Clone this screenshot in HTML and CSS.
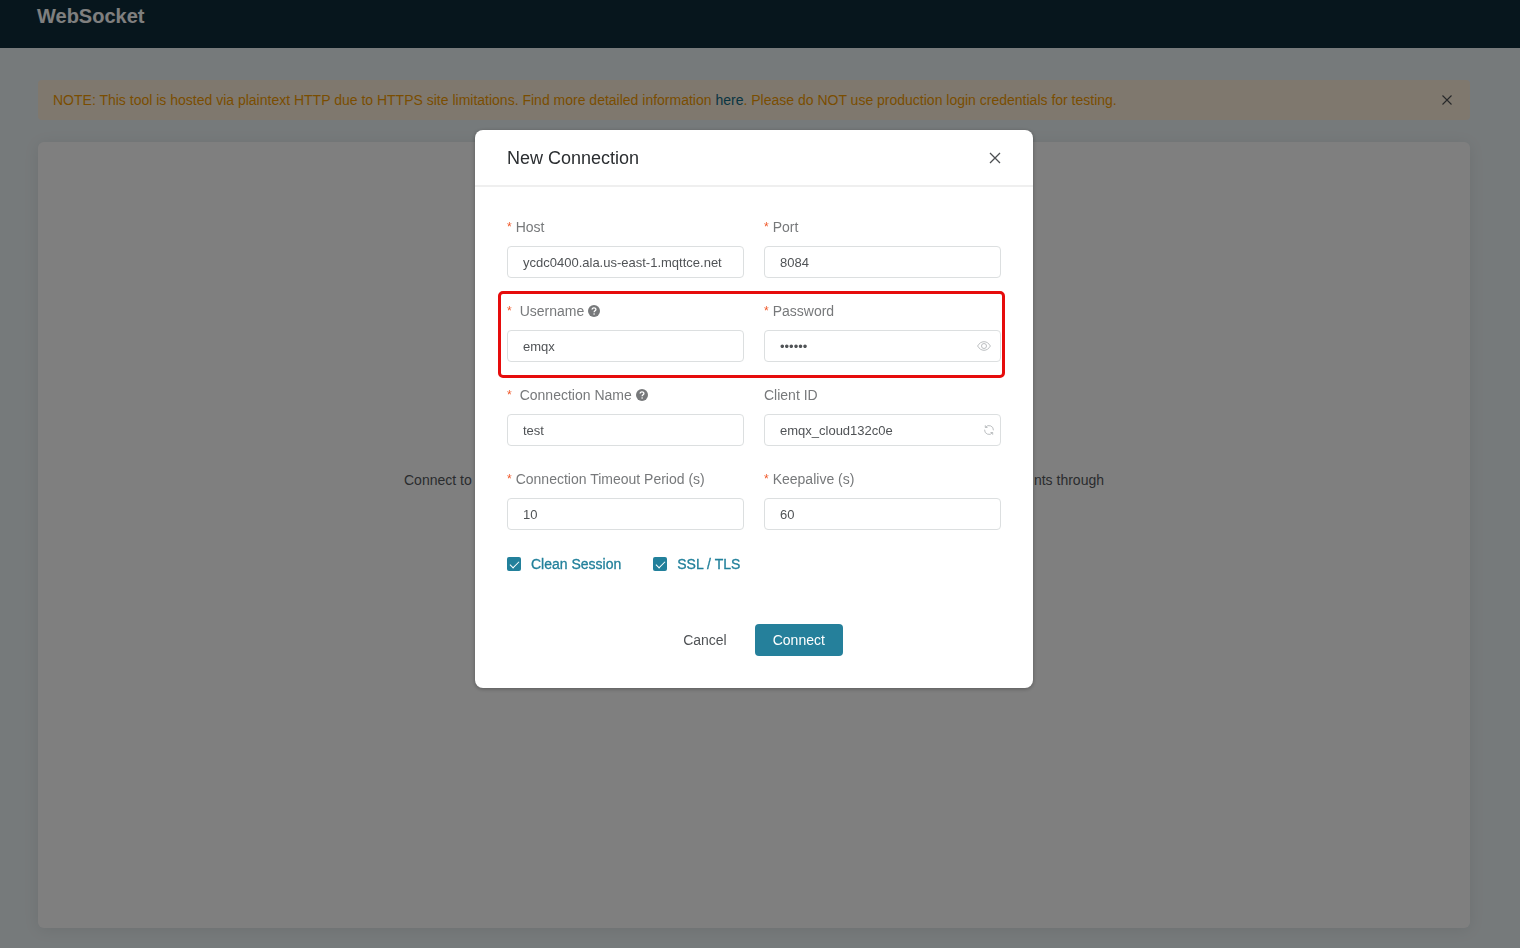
FILE: index.html
```html
<!DOCTYPE html>
<html lang="en">
<head>
<meta charset="utf-8">
<title>WebSocket</title>
<link rel="stylesheet" href="styles.css">
</head>
<body>
<header class="topbar"><h1 class="topbar-title">WebSocket</h1></header>
<main class="content">
  <div class="notice">
    <p class="notice-text">NOTE: This tool is hosted via plaintext HTTP due to HTTPS site limitations. Find more detailed information <a class="notice-link" href="#">here</a>. Please do NOT use production login credentials for testing.</p>
    <button class="icon-button" type="button" aria-label="Dismiss">
      <svg width="10" height="10" viewBox="0 0 10 10" fill="none" stroke="currentColor" stroke-width="1.1"><path d="M.5.5l9 9M9.500.5l-9 9"/></svg>
    </button>
  </div>
  <section class="panel">
    <p class="panel-hint"><span>Connect to</span><span>nts through</span></p>
  </section>
</main>

<div class="overlay">
  <form class="dialog" role="dialog" aria-labelledby="dialog-title">
    <div class="dialog-header">
      <h2 class="dialog-title" id="dialog-title">New Connection</h2>
      <button class="icon-button" type="button" aria-label="Close">
        <svg width="12" height="12" viewBox="0 0 12 12" fill="none" stroke="currentColor" stroke-width="1.3"><path d="M1 1l10 10M11 1L1 11"/></svg>
      </button>
    </div>
    <div class="dialog-body">
      <div class="row">
        <div class="field">
          <label class="label" for="host"><span class="star">*</span>Host</label>
          <input class="input" id="host" type="text" value="ycdc0400.ala.us-east-1.mqttce.net">
        </div>
        <div class="field">
          <label class="label" for="port"><span class="star">*</span>Port</label>
          <input class="input" id="port" type="text" value="8084">
        </div>
      </div>
      <div class="row row-marked">
        <div class="field">
          <label class="label label-help" for="username"><span class="star">*</span>Username
            <svg class="help" width="12" height="12" viewBox="0 0 12 12"><circle cx="6" cy="6" r="6" fill="#77797b"/><path d="M4.1 4.6c0-2.4 3.8-2.4 3.8-.1 0 1.3-1.8 1.4-1.8 2.8" fill="none" stroke="#fff" stroke-width="1.3"/><circle cx="6.1" cy="9" r=".8" fill="#fff"/></svg>
          </label>
          <input class="input" id="username" type="text" value="emqx">
        </div>
        <div class="field">
          <label class="label" for="password"><span class="star">*</span>Password</label>
          <div class="input-wrap">
            <input class="input" id="password" type="password" value="secret">
            <button class="suffix suffix-eye" type="button" aria-label="Show password">
              <svg width="14" height="14" viewBox="0 0 14 14" fill="none" stroke="currentColor" stroke-width=".9"><path d="M.6 7C2.2 4.3 4.3 2.7 7 2.7S11.800 4.300 13.400 7C11.800 9.700 9.700 11.300 7 11.300S2.200 9.700.6 7z"/><circle cx="7" cy="7" r="2.500"/></svg>
            </button>
          </div>
        </div>
      </div>
      <div class="row">
        <div class="field">
          <label class="label label-help" for="name"><span class="star">*</span>Connection Name
            <svg class="help" width="12" height="12" viewBox="0 0 12 12"><circle cx="6" cy="6" r="6" fill="#77797b"/><path d="M4.1 4.6c0-2.4 3.8-2.4 3.8-.1 0 1.3-1.8 1.4-1.8 2.8" fill="none" stroke="#fff" stroke-width="1.3"/><circle cx="6.1" cy="9" r=".8" fill="#fff"/></svg>
          </label>
          <input class="input" id="name" type="text" value="test">
        </div>
        <div class="field">
          <label class="label" for="client">Client ID</label>
          <div class="input-wrap">
            <input class="input" id="client" type="text" value="emqx_cloud132c0e">
            <button class="suffix" type="button" aria-label="Regenerate">
              <svg width="12" height="12" viewBox="0 0 12 12" fill="none" stroke="currentColor" stroke-width=".9"><path d="M2.600 3.200A4.400 4.400 0 0 1 10.400 6.300M1.600 5.700A4.400 4.400 0 0 0 9.400 8.800M2.300 1.300v2.200h2.200M9.700 10.700V8.500H7.500"/></svg>
            </button>
          </div>
        </div>
      </div>
      <div class="row">
        <div class="field">
          <label class="label" for="timeout"><span class="star">*</span>Connection Timeout Period (s)</label>
          <input class="input" id="timeout" type="text" value="10">
        </div>
        <div class="field">
          <label class="label" for="keepalive"><span class="star">*</span>Keepalive (s)</label>
          <input class="input" id="keepalive" type="text" value="60">
        </div>
      </div>
      <div class="checks">
        <label class="check"><input class="checkbox" type="checkbox" checked>Clean Session</label>
        <label class="check"><input class="checkbox" type="checkbox" checked>SSL / TLS</label>
      </div>
    </div>
    <div class="dialog-footer">
      <button class="button" type="button">Cancel</button>
      <button class="button button-primary" type="button">Connect</button>
    </div>
  </form>
</div>
</body>
</html>
```
FILE: styles.css
```css
* {
  box-sizing: border-box;
}

body {
  margin: 0;
  min-height: 100vh;
  display: flex;
  flex-direction: column;
  background: #edf4f6;
  color: #54585c;
  font: 14px/20px "Liberation Sans", Arial, sans-serif;
}

h1,
h2,
p {
  margin: 0;
}

button,
input {
  font: inherit;
  margin: 0;
}

.topbar {
  height: 48px;
  padding: 4px 37px;
  background: #0e2d3a;
}

.topbar-title {
  font-size: 20px;
  line-height: 24px;
  color: #fff;
}

.content {
  flex: 1;
  display: flex;
  flex-direction: column;
  gap: 22px;
  padding: 32px 50px 20px 38px;
}

.notice {
  display: flex;
  align-items: center;
  justify-content: space-between;
  min-height: 40px;
  padding: 0 18px 0 15px;
  border-radius: 4px;
  background: #fff0dc;
}

.notice-text {
  color: #f59b00;
}

.notice-link {
  color: #116a85;
  text-decoration: none;
}

.icon-button {
  display: flex;
  padding: 0;
  border: 0;
  background: none;
  color: #4c4f52;
}

.panel {
  flex: 1;
  display: flex;
  justify-content: center;
  padding: 328px 20px 20px;
  border-radius: 6px;
  background: #fff;
  box-shadow: 0 2px 16px rgba(0, 0, 0, 0.08);
}

.panel-hint {
  display: flex;
  justify-content: space-between;
  width: 700px;
}

.overlay {
  position: fixed;
  inset: 0;
  display: flex;
  justify-content: center;
  align-items: flex-start;
  padding: 130px 12px 0 0;
  background: rgba(0, 0, 0, 0.5);
}

.dialog {
  width: 558px;
  padding-bottom: 32px;
  border-radius: 8px;
  background: #fff;
  box-shadow: 0 1px 4px rgba(0, 0, 0, 0.3);
}

.dialog-header {
  display: flex;
  align-items: center;
  justify-content: space-between;
  height: 57px;
  padding: 0 32px;
  border-bottom: 2px solid #efefef;
}

.dialog-title {
  font-size: 18px;
  font-weight: 400;
  color: #2b2e31;
}

.dialog-body {
  display: flex;
  flex-direction: column;
  gap: 22px;
  padding: 29px 32px 0;
}

.row {
  display: grid;
  grid-template-columns: 1fr 1fr;
  gap: 20px;
}

.row-marked {
  position: relative;
}

.row-marked::after {
  content: "";
  position: absolute;
  inset: -9px -4px -16px -9px;
  border: 3px solid #e60c0c;
  border-radius: 5px;
  pointer-events: none;
}

.field {
  display: flex;
  flex-direction: column;
  gap: 8px;
}

.label {
  display: flex;
  align-items: center;
  gap: 4px;
  height: 22px;
  line-height: 20px;
  color: #77797b;
}

.label-help .star {
  margin-right: 4px;
}

.star {
  font-size: 12px;
  color: #f0592a;
}

.input {
  width: 100%;
  height: 32px;
  padding: 0 15px;
  border: 1px solid #dcdfe0;
  border-radius: 4px;
  background: #fff;
  color: #505356;
  font-size: 13px;
}

.input-wrap {
  position: relative;
}

.suffix {
  position: absolute;
  top: 0;
  right: 6px;
  height: 32px;
  display: flex;
  align-items: center;
  padding: 0;
  border: 0;
  background: none;
  color: #b4b8ba;
}

.suffix-eye {
  right: 10px;
}

.checks {
  display: flex;
  gap: 32px;
  padding-top: 2px;
}

.check {
  display: flex;
  align-items: center;
  gap: 10px;
  color: #22809b;
  -webkit-text-stroke: 0.3px currentColor;
}

.checkbox {
  appearance: none;
  display: flex;
  justify-content: center;
  width: 14px;
  height: 14px;
  border-radius: 2px;
  background: #22809b;
}

.checkbox:checked::after {
  content: "";
  width: 4px;
  height: 8px;
  margin-top: 2px;
  border: solid #fff;
  border-width: 0 1px 1px 0;
  transform: rotate(45deg);
}

.dialog-footer {
  display: flex;
  justify-content: center;
  gap: 10px;
  padding-top: 50px;
}

.button {
  height: 32px;
  padding: 0 18px;
  border: 0;
  border-radius: 4px;
  background: none;
  color: #505356;
}

.button-primary {
  background: #25809b;
  color: #fff;
}
```
